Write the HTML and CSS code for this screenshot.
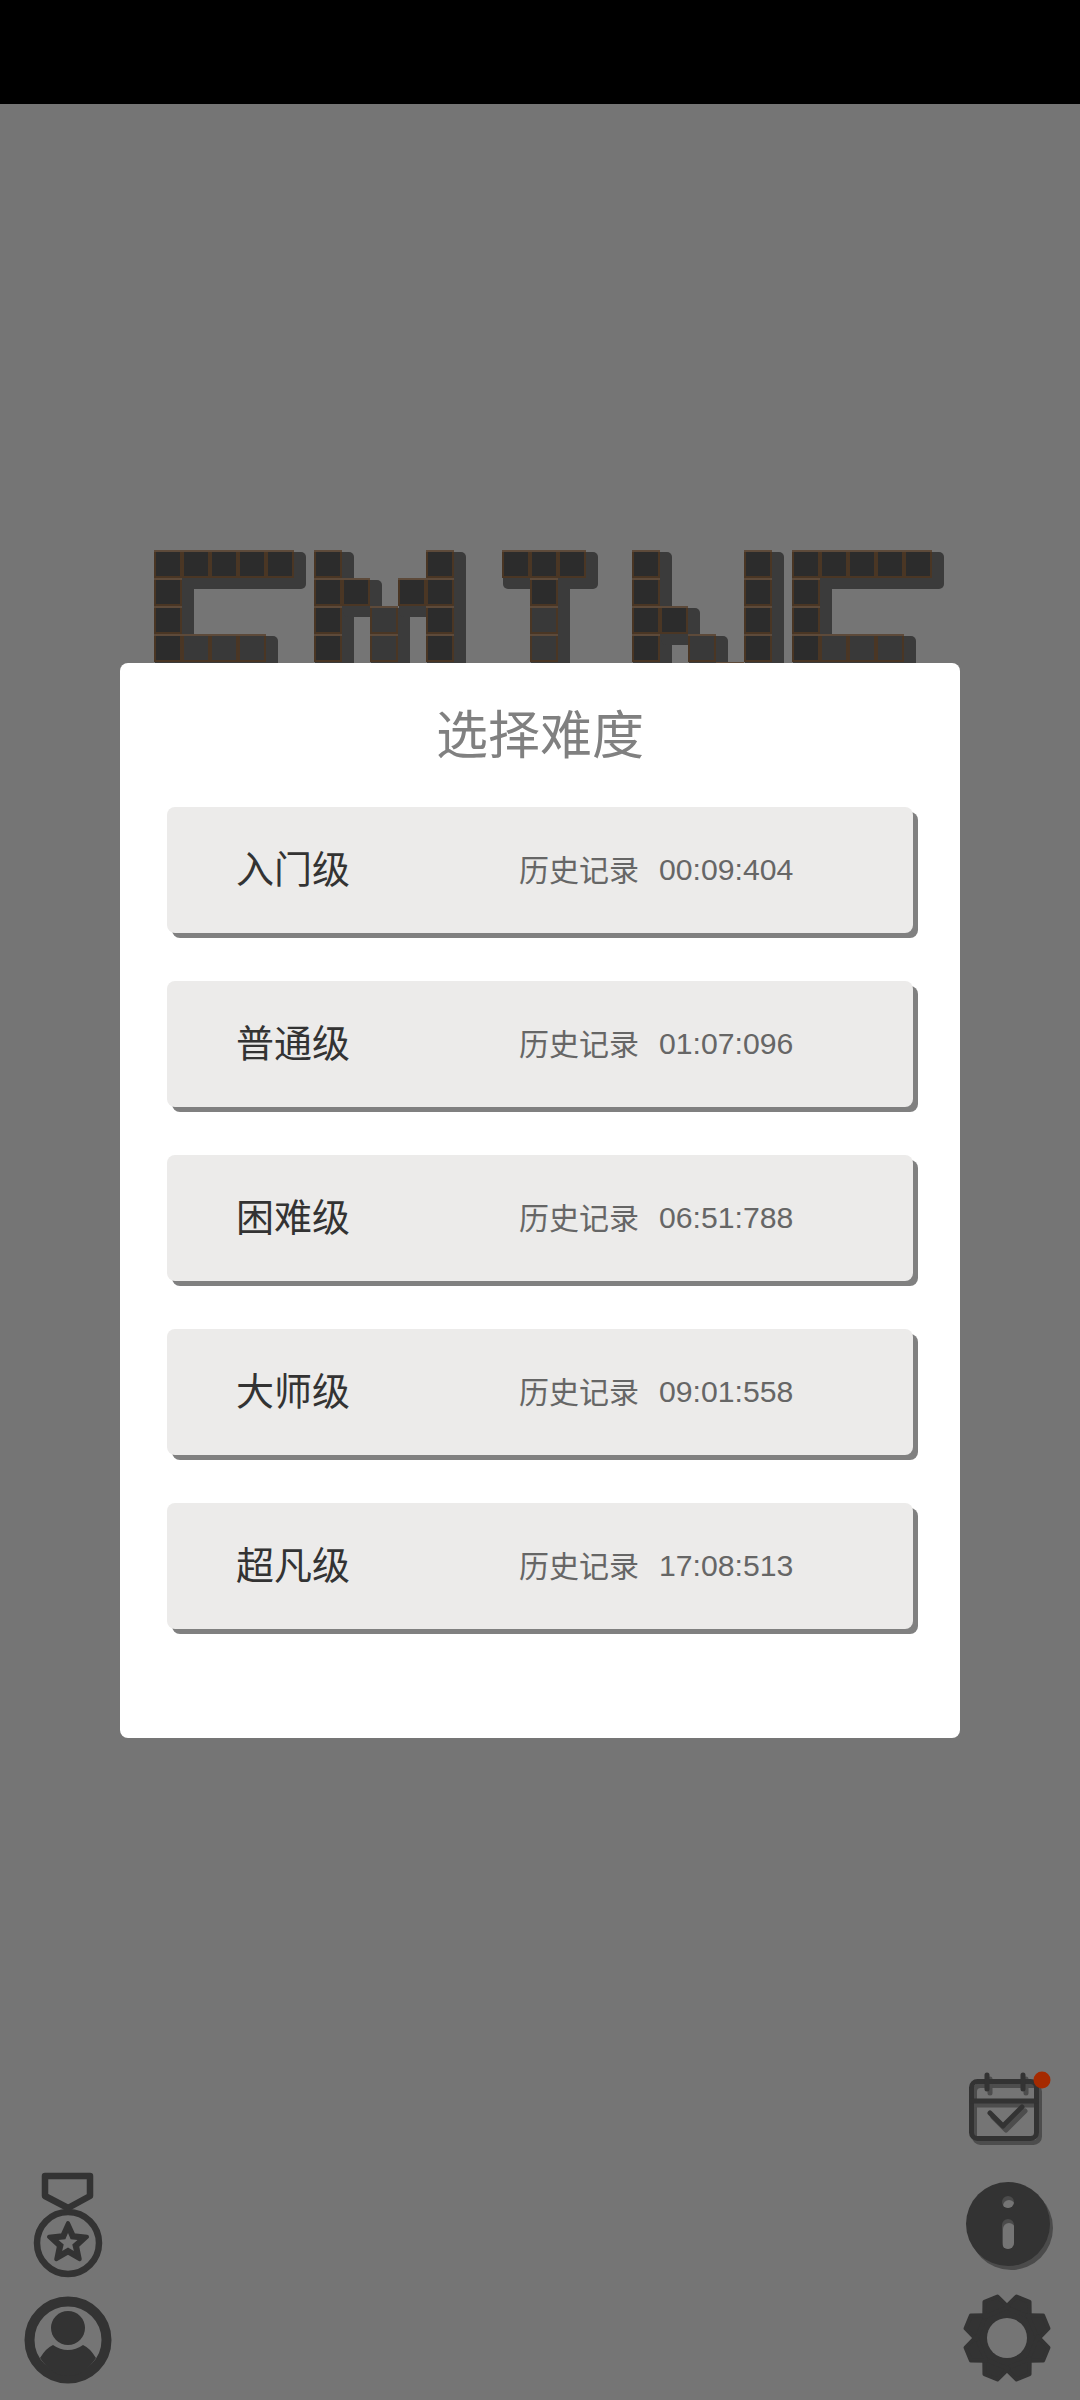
FILE: index.html
```html
<!DOCTYPE html>
<html lang="zh-CN">
    <head>
        <meta charset="UTF-8" />
        <meta name="viewport" content="width=device-width, initial-scale=1.0" />
        <title>选择难度</title>
        <link rel="stylesheet" href="styles.css">
    </head>
    <body>
        <div class="status-bar"></div>

        <div class="stage">
            <!-- Game logo, dimmed behind the dialog -->
            <div class="logo-layer">
                <svg class="logo" width="800" height="130" viewBox="0 0 800 130">
                    <defs>
                        <g id="tile">
                            <rect class="tile-edge" width="28" height="28" />
                            <rect class="tile-top" width="28" height="2" />
                            <rect x="2" y="2" width="24" height="24" />
                        </g>
                    </defs>
                    <g class="logo-shadow">
                        <rect x="5" y="6" width="151" height="37" rx="5" />
                        <rect x="5" y="6" width="39" height="121" rx="5" />
                        <rect x="5" y="90" width="123" height="37" rx="5" />
                        <rect x="165" y="6" width="39" height="121" rx="5" />
                        <rect x="193" y="34" width="39" height="37" rx="5" />
                        <rect x="221" y="62" width="39" height="65" rx="5" />
                        <rect x="249" y="34" width="39" height="37" rx="5" />
                        <rect x="277" y="6" width="39" height="121" rx="5" />
                        <rect x="353" y="6" width="95" height="37" rx="5" />
                        <rect x="381" y="6" width="39" height="121" rx="5" />
                        <rect x="483" y="6" width="39" height="121" rx="5" />
                        <rect x="511" y="62" width="39" height="37" rx="5" />
                        <rect x="539" y="90" width="39" height="37" rx="5" />
                        <rect x="595" y="6" width="39" height="121" rx="5" />
                        <rect x="643" y="6" width="151" height="37" rx="5" />
                        <rect x="643" y="6" width="39" height="121" rx="5" />
                        <rect x="643" y="90" width="123" height="37" rx="5" />
                    </g>
                    <g class="logo-tiles">
                        <use href="#tile" x="4" y="4" />
                        <use href="#tile" x="32" y="4" />
                        <use href="#tile" x="60" y="4" />
                        <use href="#tile" x="88" y="4" />
                        <use href="#tile" x="116" y="4" />
                        <use href="#tile" x="4" y="32" />
                        <use href="#tile" x="4" y="60" />
                        <use href="#tile" x="4" y="88" />
                        <use class="tile-light" href="#tile" x="32" y="88" />
                        <use class="tile-light" href="#tile" x="60" y="88" />
                        <use class="tile-light" href="#tile" x="88" y="88" />

                        <use href="#tile" x="164" y="4" />
                        <use href="#tile" x="164" y="32" />
                        <use href="#tile" x="164" y="60" />
                        <use href="#tile" x="164" y="88" />
                        <use href="#tile" x="192" y="32" />
                        <use class="tile-light" href="#tile" x="220" y="60" />
                        <use class="tile-light" href="#tile" x="220" y="88" />
                        <use href="#tile" x="248" y="32" />
                        <use href="#tile" x="276" y="4" />
                        <use href="#tile" x="276" y="32" />
                        <use href="#tile" x="276" y="60" />
                        <use href="#tile" x="276" y="88" />

                        <use href="#tile" x="352" y="4" />
                        <use href="#tile" x="380" y="4" />
                        <use href="#tile" x="408" y="4" />
                        <use href="#tile" x="380" y="32" />
                        <use class="tile-light" href="#tile" x="380" y="60" />
                        <use class="tile-light" href="#tile" x="380" y="88" />

                        <use href="#tile" x="482" y="4" />
                        <use href="#tile" x="482" y="32" />
                        <use href="#tile" x="482" y="60" />
                        <use href="#tile" x="482" y="88" />
                        <use href="#tile" x="510" y="60" />
                        <use class="tile-light" href="#tile" x="538" y="88" />
                        <use class="tile-light" href="#tile" x="566" y="116" />
                        <use href="#tile" x="594" y="4" />
                        <use href="#tile" x="594" y="32" />
                        <use href="#tile" x="594" y="60" />
                        <use href="#tile" x="594" y="88" />

                        <use href="#tile" x="642" y="4" />
                        <use href="#tile" x="670" y="4" />
                        <use href="#tile" x="698" y="4" />
                        <use href="#tile" x="726" y="4" />
                        <use href="#tile" x="754" y="4" />
                        <use href="#tile" x="642" y="32" />
                        <use href="#tile" x="642" y="60" />
                        <use href="#tile" x="642" y="88" />
                        <use class="tile-light" href="#tile" x="670" y="88" />
                        <use class="tile-light" href="#tile" x="698" y="88" />
                        <use class="tile-light" href="#tile" x="726" y="88" />
                    </g>
                </svg>
            </div>

            <!-- Corner buttons -->
            <div class="corner-layer">
                <div class="corner-col corner-left">
                    <svg class="icon-medal" width="72" height="110" viewBox="0 0 72 110">
                        <path class="line" d="M13 5 H58 V25 L36 37 L13 25 Z" />
                        <circle class="line" cx="36" cy="72" r="31" />
                        <polygon class="solid star" points="36,52 41.58,64.31 55.02,65.82 45.03,74.94 47.76,88.18 36,81.5 24.24,88.18 26.97,74.94 16.98,65.82 30.42,64.31" />
                        <polygon class="cut" points="36,62 38.65,68.36 45.51,68.91 40.28,73.39 41.88,80.09 36,76.5 30.12,80.09 31.72,73.39 26.49,68.91 33.35,68.36" />
                    </svg>
                    <svg class="icon-avatar" width="88" height="88" viewBox="0 0 88 88">
                        <circle class="line thick" cx="44" cy="44" r="38.5" />
                        <circle class="solid" cx="44" cy="32" r="17" />
                        <path class="solid" d="M16 62 Q22 52 29 49 Q36 54 44 54 Q52 54 59 49 Q66 52 72 62 Q60 80 44 80 Q28 80 16 62 Z" />
                    </svg>
                </div>
                <div class="corner-col corner-right">
                    <svg class="icon-calendar" width="94" height="80" viewBox="0 0 94 80">
                        <defs>
                            <g id="calendar">
                                <rect x="11.5" y="10.5" width="65" height="57" rx="6" />
                                <path d="M11.5 30 H76.5 M27 4 V18 M63 4 V18 M30 42 L43 55 L62 36" />
                            </g>
                        </defs>
                        <use class="calendar-shadow" href="#calendar" x="3" y="4" />
                        <use class="calendar-main" href="#calendar" />
                        <circle class="badge-dot" cx="82" cy="9" r="8.5" />
                    </svg>
                    <svg class="icon-info" width="94" height="96" viewBox="0 0 94 96">
                        <defs>
                            <clipPath id="info-dot"><circle cx="48" cy="25" r="6" /></clipPath>
                            <clipPath id="info-stem"><rect x="42" y="42" width="12" height="30" rx="6" /></clipPath>
                        </defs>
                        <circle class="info-shadow" cx="51" cy="51" r="42" />
                        <circle class="solid" cx="48" cy="47" r="42" />
                        <circle class="info-shadow" cx="48" cy="25" r="6" />
                        <rect class="info-shadow" x="42" y="42" width="12" height="30" rx="6" />
                        <circle class="cut" cx="49" cy="29" r="6" clip-path="url(#info-dot)" />
                        <rect class="cut" x="43" y="46" width="12" height="30" rx="6" clip-path="url(#info-stem)" />
                    </svg>
                    <svg class="icon-gear" width="94" height="96" viewBox="0 0 94 96">
                        <defs>
                            <path id="tooth" d="M34 20 L40 6 H54 L60 20 Z" />
                        </defs>
                        <circle class="solid" cx="47" cy="48" r="34" />
                        <g class="gear-teeth">
                            <use href="#tooth" transform="rotate(22.5 47 48)" />
                            <use href="#tooth" transform="rotate(67.5 47 48)" />
                            <use href="#tooth" transform="rotate(112.5 47 48)" />
                            <use href="#tooth" transform="rotate(157.5 47 48)" />
                            <use href="#tooth" transform="rotate(202.5 47 48)" />
                            <use href="#tooth" transform="rotate(247.5 47 48)" />
                            <use href="#tooth" transform="rotate(292.5 47 48)" />
                            <use href="#tooth" transform="rotate(337.5 47 48)" />
                        </g>
                        <circle class="cut" cx="47" cy="48" r="20" />
                    </svg>
                </div>
            </div>

            <!-- Difficulty dialog -->
            <div class="dialog-layer">
                <div class="dialog">
                    <h1 class="dialog-title">选择难度</h1>
                    <div class="level-list">
                        <div class="level">
                            <span class="level-name">入门级</span>
                            <span class="level-label">历史记录</span>
                            <span class="level-time">00:09:404</span>
                        </div>
                        <div class="level">
                            <span class="level-name">普通级</span>
                            <span class="level-label">历史记录</span>
                            <span class="level-time">01:07:096</span>
                        </div>
                        <div class="level">
                            <span class="level-name">困难级</span>
                            <span class="level-label">历史记录</span>
                            <span class="level-time">06:51:788</span>
                        </div>
                        <div class="level">
                            <span class="level-name">大师级</span>
                            <span class="level-label">历史记录</span>
                            <span class="level-time">09:01:558</span>
                        </div>
                        <div class="level">
                            <span class="level-name">超凡级</span>
                            <span class="level-label">历史记录</span>
                            <span class="level-time">17:08:513</span>
                        </div>
                    </div>
                </div>
            </div>
        </div>
    </body>
</html>
```

FILE: styles.css
```css
html,
body {
    margin: 0;
    padding: 0;
}

body {
    width: 1080px;
    height: 2400px;
    overflow: hidden;
    background-color: #757575;
    font-family: "Liberation Sans", "Noto Sans CJK SC", sans-serif;
}

.status-bar {
    height: 104px;
    background-color: #000000;
}

.stage {
    display: grid;
    height: 2296px;
}

.logo-layer,
.corner-layer,
.dialog-layer {
    grid-area: 1 / 1;
}

/* logo */
.logo-layer {
    padding: 442px 0 0 150px;
}

.logo {
    display: block;
}

.logo-shadow {
    fill: #3b3b3b;
}

.logo-tiles {
    fill: #2c2c2c;
}

.tile-light {
    fill: #393939;
}

.tile-edge {
    fill: #4a3624;
}

.tile-top {
    fill: #5d4a3a;
}

/* corner icons */
.corner-layer {
    display: flex;
    justify-content: space-between;
    align-items: flex-end;
}

.corner-col {
    display: flex;
    flex-direction: column;
}

.corner-left {
    align-items: center;
    width: 88px;
    padding: 0 0 16px 24px;
    gap: 15px;
}

.corner-right {
    padding-right: 26px;
    gap: 17px;
    padding-bottom: 14px;
}

.corner-col svg {
    display: block;
}

.icon-calendar {
    margin-bottom: 9px;
}

.line {
    fill: none;
    stroke: #333333;
    stroke-width: 6.5;
    stroke-linejoin: round;
}

.thick {
    stroke-width: 10;
}

.solid {
    fill: #333333;
}

.star {
    stroke: #333333;
    stroke-width: 4;
    stroke-linejoin: round;
}

.cut {
    fill: #757575;
}

.calendar-main,
.calendar-shadow {
    fill: none;
    stroke-width: 5;
    stroke-linecap: round;
    stroke-linejoin: round;
}

.calendar-main {
    stroke: #333333;
}

.calendar-shadow {
    stroke: #4d4d4d;
}

.badge-dot {
    fill: #a52a00;
}

.info-shadow {
    fill: #4b4b4b;
}

.gear-teeth {
    fill: #333333;
    stroke: #333333;
    stroke-width: 4;
    stroke-linejoin: round;
}

/* dialog */
.dialog-layer {
    padding: 559px 120px 0;
}

.dialog {
    height: 1075px;
    box-sizing: border-box;
    background-color: #ffffff;
    border-radius: 8px;
    padding: 0 47px;
}

.dialog-title {
    margin: 0;
    height: 144px;
    line-height: 146px;
    text-align: center;
    font-size: 52px;
    font-weight: 400;
    color: #808080;
}

.level-list {
    display: flex;
    flex-direction: column;
    gap: 48px;
}

.level {
    display: flex;
    align-items: center;
    height: 126px;
    padding-left: 69px;
    background-color: #ecebea;
    border-radius: 8px;
    box-shadow: 5px 5px 0 #808080;
}

.level-name {
    width: 283px;
    font-size: 38px;
    color: #333333;
    margin-top: -8px;
}

.level-label {
    width: 140px;
    font-size: 30px;
    color: #666666;
    margin-top: -5px;
}

.level-time {
    font-size: 30.2px;
    color: #666666;
}
```
